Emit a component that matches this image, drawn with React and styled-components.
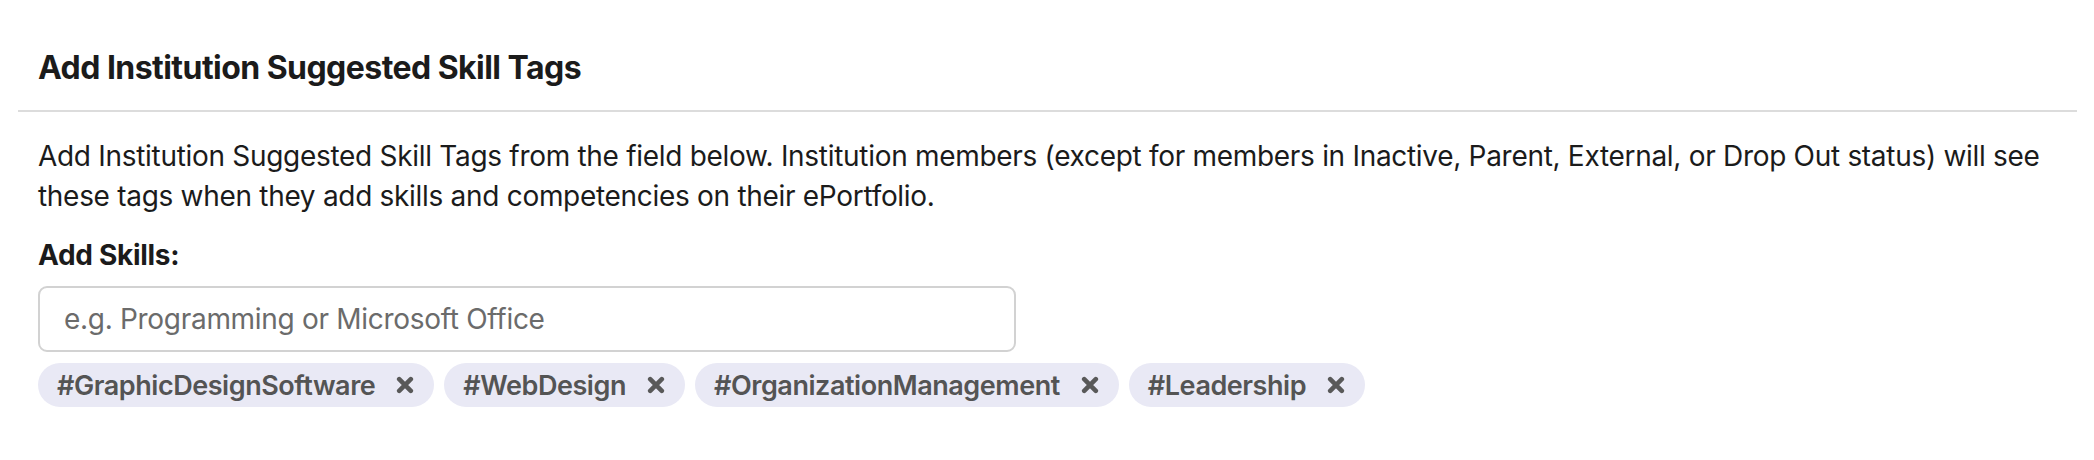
import React from "react";
import styled, { createGlobalStyle } from "styled-components";

const GlobalStyle = createGlobalStyle`
  body {
    margin: 0;
    background: #ffffff;
    font-family: Inter, "Liberation Sans", sans-serif;
    color: #1b1b1b;
  }
`;

const Panel = styled.section`
  padding: 48px 17px 40px 18px;
`;

const Header = styled.header`
  padding: 0 20px 22px;
  border-bottom: 2px solid #dcdcdc;
`;

const Title = styled.h2`
  margin: 0;
  font-size: 32px;
  line-height: 40px;
  font-weight: 700;
  letter-spacing: -0.55px;
`;

const Body = styled.div`
  padding: 24px 20px 0;
`;

const Intro = styled.p`
  margin: 0;
  font-size: 28px;
  line-height: 40px;
  letter-spacing: -0.3px;
`;

const Label = styled.label`
  display: block;
  margin-top: 19px;
  font-size: 28px;
  line-height: 40px;
  font-weight: 700;
  letter-spacing: -0.3px;
`;

const Input = styled.input`
  display: block;
  box-sizing: border-box;
  width: 978px;
  height: 66px;
  margin-top: 11px;
  padding: 0 24px;
  border: 2px solid #d2d2d2;
  border-radius: 9px;
  font-family: inherit;
  font-size: 28px;
  letter-spacing: -0.3px;
  color: #1b1b1b;
  outline: none;

  &::placeholder {
    color: #6b6b6b;
  }
`;

const TagList = styled.ul`
  display: flex;
  flex-wrap: wrap;
  gap: 10px;
  margin: 11px 0 0;
  padding: 0;
  list-style: none;
`;

const Tag = styled.li`
  display: flex;
  align-items: center;
  gap: 21px;
  height: 44px;
  padding: 0 20px 0 19px;
  border-radius: 22px;
  background: #e9e9f5;
  color: #545454;
  font-size: 27px;
  font-weight: 600;
  letter-spacing: -0.45px;
`;

const Remove = styled.button`
  display: flex;
  padding: 0;
  border: 0;
  background: none;
  color: #595959;
  cursor: pointer;
`;

const CrossIcon = () => (
  <svg width="18" height="18" viewBox="0 0 18 18" aria-hidden="true">
    <path
      d="M3.2 3.2 L14.8 14.8 M14.8 3.2 L3.2 14.8"
      stroke="currentColor"
      strokeWidth="4.6"
      strokeLinecap="round"
    />
  </svg>
);

const skills = [
  "GraphicDesignSoftware",
  "WebDesign",
  "OrganizationManagement",
  "Leadership",
];

export default function App() {
  return (
    <>
      <GlobalStyle />
      <Panel>
        <Header>
          <Title>Add Institution Suggested Skill Tags</Title>
        </Header>
        <Body>
          <Intro>
            Add Institution Suggested Skill Tags from the field below. Institution
            members (except for members in Inactive, Parent, External, or Drop Out
            status) will see these tags when they add skills and competencies on
            their ePortfolio.
          </Intro>
          <Label htmlFor="skills">Add Skills:</Label>
          <Input id="skills" placeholder="e.g. Programming or Microsoft Office" />
          <TagList>
            {skills.map((skill) => (
              <Tag key={skill}>
                #{skill}
                <Remove aria-label={`Remove ${skill}`}>
                  <CrossIcon />
                </Remove>
              </Tag>
            ))}
          </TagList>
        </Body>
      </Panel>
    </>
  );
}
